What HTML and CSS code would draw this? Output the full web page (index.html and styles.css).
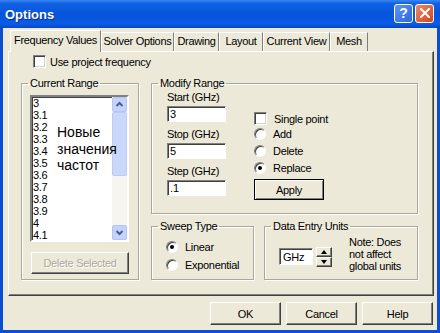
FILE: index.html
```html
<!DOCTYPE html>
<html lang="en">
<head>
    <meta charset="UTF-8">
    <meta name="viewport" content="width=device-width, initial-scale=1.0">
    <title>Options</title>
    <link rel="stylesheet" href="styles.css">
</head>
<body>
    <div class="window">
        <div class="titlebar">
            <span class="title">Options</span>
            <div class="title-btns">
                <span class="tbtn tbtn-help">?</span>
                <span class="tbtn tbtn-close">
                    <svg width="10" height="10" viewBox="0 0 10 10"><path d="M1 1L9 9M9 1L1 9" stroke="#fff" stroke-width="2" stroke-linecap="square"/></svg>
                </span>
            </div>
        </div>
        <div class="client">
            <div class="tabs">
                <span class="tab active" style="width:91px">Frequency Values</span>
                <span class="tab" style="width:73px">Solver Options</span>
                <span class="tab" style="width:45px">Drawing</span>
                <span class="tab" style="width:44px">Layout</span>
                <span class="tab" style="width:67px">Current View</span>
                <span class="tab" style="width:38px">Mesh</span>
            </div>
            <div class="panel">
                <label class="check top-check"><span class="box"></span>Use project frequency</label>
                <div class="panel-grid">
                    <fieldset class="group current">
                        <legend>Current Range</legend>
                        <div class="listbox">
                            <ul class="items">
                                <li>3</li>
                                <li>3.1</li>
                                <li>3.2</li>
                                <li>3.3</li>
                                <li>3.4</li>
                                <li>3.5</li>
                                <li>3.6</li>
                                <li>3.7</li>
                                <li>3.8</li>
                                <li>3.9</li>
                                <li>4</li>
                                <li>4.1</li>
                            </ul>
                            <div class="scrollbar">
                                <span class="sb-btn">
                                    <svg width="13" height="13" viewBox="0 0 13 13"><path d="M3.5 8L6.5 5L9.5 8" fill="none" stroke="#4d6185" stroke-width="2"/></svg>
                                </span>
                                <span class="sb-thumb"></span>
                                <span class="sb-track"></span>
                                <span class="sb-btn">
                                    <svg width="13" height="13" viewBox="0 0 13 13"><path d="M3.5 5L6.5 8L9.5 5" fill="none" stroke="#4d6185" stroke-width="2"/></svg>
                                </span>
                            </div>
                            <div class="note">Новые<br>значения<br>частот</div>
                        </div>
                        <button class="btn btn-delete" disabled>Delete Selected</button>
                    </fieldset>

                    <div class="right-col">
                        <fieldset class="group modify">
                            <legend>Modify Range</legend>
                            <div class="modify-body">
                                <div class="fields">
                                    <label class="field-label" for="start">Start (GHz)</label>
                                    <input class="text-box" id="start" type="text" value="3">
                                    <label class="field-label" for="stop">Stop (GHz)</label>
                                    <input class="text-box" id="stop" type="text" value="5">
                                    <label class="field-label" for="step">Step (GHz)</label>
                                    <input class="text-box" id="step" type="text" value=".1">
                                </div>
                                <div class="options">
                                    <label class="check"><span class="box"></span>Single point</label>
                                    <label class="radio-row"><span class="radio"></span>Add</label>
                                    <label class="radio-row"><span class="radio"></span>Delete</label>
                                    <label class="radio-row"><span class="radio checked"></span>Replace</label>
                                    <button class="btn btn-default">Apply</button>
                                </div>
                            </div>
                        </fieldset>

                        <div class="lower">
                            <fieldset class="group sweep">
                                <legend>Sweep Type</legend>
                                <label class="radio-row tall"><span class="radio checked"></span>Linear</label>
                                <label class="radio-row tall"><span class="radio"></span>Exponential</label>
                            </fieldset>
                            <fieldset class="group units">
                                <legend>Data Entry Units</legend>
                                <div class="units-body">
                                    <span class="unit-box">GHz</span>
                                    <span class="spinner">
                                        <span class="spin-btn"><span class="tri-up"></span></span>
                                        <span class="spin-btn"><span class="tri-down"></span></span>
                                    </span>
                                    <p class="units-note">Note: Does<br>not affect<br>global units</p>
                                </div>
                            </fieldset>
                        </div>
                    </div>
                </div>
            </div>
            <div class="actions">
                <button class="btn btn-action">OK</button>
                <button class="btn btn-action">Cancel</button>
                <button class="btn btn-action">Help</button>
            </div>
        </div>
    </div>
</body>
</html>
```

FILE: styles.css
```css
body {
    margin: 0;
    font-family: "Liberation Sans", Arial, sans-serif;
    font-size: 11px;
    letter-spacing: -0.3px;
    color: #000;
}
.window {
    width: 440px;
    height: 333px;
    display: flex;
    flex-direction: column;
    background: #0a4ed6;
}
.titlebar {
    height: 28px;
    flex: none;
    display: flex;
    align-items: center;
    justify-content: space-between;
    padding: 0 6px 0 5px;
    background: linear-gradient(#3a86f4 0%, #1262e6 12%, #0554d9 50%, #0a5ce6 85%, #0846c6 100%);
}
.title {
    color: #fff;
    font-weight: bold;
    font-size: 13px;
    letter-spacing: 0;
    text-shadow: 1px 1px 0 #0a2a8c;
}
.title-btns {
    display: flex;
    gap: 2px;
    margin-top: -2px;
}
.tbtn {
    width: 17px;
    height: 17px;
    border: 1px solid #fff;
    border-radius: 3px;
    display: flex;
    align-items: center;
    justify-content: center;
    color: #fff;
    font-weight: bold;
    font-size: 14px;
    letter-spacing: 0;
}
.tbtn-help {
    background: linear-gradient(135deg, #5d95f6, #2a67e3);
}
.tbtn-close {
    background: linear-gradient(135deg, #ee8a66, #d4421f);
}
.client {
    flex: 1;
    margin: 0 3px 3px;
    background: #ece9d8;
    display: flex;
    flex-direction: column;
}
.tabs {
    display: flex;
    align-items: flex-end;
    height: 21px;
    margin: 2px 0 0 7px;
    position: relative;
    z-index: 1;
}
.tab {
    box-sizing: border-box;
    height: 19px;
    line-height: 17px;
    text-align: center;
    white-space: nowrap;
    border: 1px solid #fff;
    border-right-color: #808080;
    border-bottom: none;
}
.tab.active {
    height: 22px;
    margin-bottom: -1px;
    line-height: 18px;
    background: #ece9d8;
}
.panel {
    box-sizing: border-box;
    height: 245px;
    margin: 0 3px 0 5px;
    padding: 3px 0 0 12px;
    border: 1px solid;
    border-color: #fff #404040 #404040 #fff;
    box-shadow: inset -1px -1px 0 #808080;
}
.check {
    display: flex;
    align-items: center;
    height: 13px;
    white-space: nowrap;
}
.box {
    box-sizing: border-box;
    width: 13px;
    height: 13px;
    margin-right: 5px;
    background: #fff;
    border: 1px solid;
    border-color: #808080 #fff #fff #808080;
    box-shadow: inset 1px 1px 0 #404040, inset -1px -1px 0 #d4d0c8;
}
.top-check {
    margin-left: 12px;
    margin-left: 12px;
}
.top-check .box {
    margin-right: 4px;
}
.panel-grid {
    display: grid;
    grid-template-columns: 118px 267px;
    column-gap: 12px;
    height: 203px;
    margin-top: 9px;
}
.group {
    margin: 0;
    padding: 0;
    min-width: 0;
    border: 1px solid #aca899;
    box-shadow: inset 1px 1px 0 #fff, 1px 1px 0 #fff;
}
.group legend {
    margin-left: 6px;
    padding: 0 2px;
    line-height: 13px;
}
.listbox {
    position: relative;
    box-sizing: border-box;
    display: flex;
    width: 99px;
    height: 147px;
    margin: 5px 0 0 8px;
    background: #fff;
    border: 2px solid;
    border-color: #808080 #fff #fff #808080;
    box-shadow: inset 1px 1px 0 #404040;
}
.items {
    flex: 1;
    list-style: none;
    margin: 0;
    padding: 0 0 0 1px;
    line-height: 12px;
    overflow: hidden;
}
.scrollbar {
    width: 15px;
    flex: none;
    display: flex;
    flex-direction: column;
    background: #f6f5f0;
}
.sb-btn {
    box-sizing: border-box;
    height: 15px;
    flex: none;
    display: flex;
    align-items: center;
    justify-content: center;
    background: #c3d3fb;
    border: 1px solid #b2c5f3;
    border-radius: 2px;
}
.sb-thumb {
    box-sizing: border-box;
    height: 64px;
    flex: none;
    background: #cad8fb;
    border: 1px solid #bccdf5;
    border-radius: 2px;
}
.sb-track {
    flex: 1;
}
.note {
    position: absolute;
    left: 25px;
    top: 27px;
    font-size: 14px;
    line-height: 16.5px;
    letter-spacing: 0;
}
.btn {
    box-sizing: border-box;
    font-family: inherit;
    font-size: 11px;
    letter-spacing: -0.3px;
    color: #000;
    background: #ece9d8;
    padding: 0;
    border: 1px solid;
    border-color: #fff #404040 #404040 #fff;
    box-shadow: inset -1px -1px 0 #808080;
}
.btn-delete {
    display: block;
    width: 98px;
    height: 22px;
    margin: 10px 0 0 9px;
    color: #aca899;
    text-shadow: 1px 1px 0 #fff;
}
.right-col {
    display: flex;
    flex-direction: column;
    gap: 6px;
}
.modify {
    height: 137px;
    box-sizing: border-box;
}
.modify-body {
    display: flex;
    padding: 1px 0 0 15px;
}
.fields {
    display: flex;
    flex-direction: column;
    width: 59px;
}
.field-label {
    line-height: 13px;
    white-space: nowrap;
}
.text-box {
    box-sizing: border-box;
    width: 59px;
    height: 16px;
    margin: 2px 0 6px;
    padding: 0 0 0 2px;
    font-family: inherit;
    font-size: 11px;
    background: #fff;
    border: 1px solid;
    border-color: #808080 #fff #fff #808080;
    box-shadow: inset 1px 1px 0 #404040;
    outline: none;
}
.options {
    display: flex;
    flex-direction: column;
    margin: 21px 0 0 28px;
}
.options .box {
    margin-right: 7px;
}
.radio-row {
    display: flex;
    align-items: center;
    height: 17px;
    white-space: nowrap;
}
.radio-row.tall {
    height: 18px;
    margin-left: 14px;
}
.radio {
    position: relative;
    box-sizing: border-box;
    width: 12px;
    height: 12px;
    margin-right: 7px;
    border-radius: 50%;
    background: #fff;
    border: 1px solid;
    border-color: #808080 #fff #fff #808080;
    box-shadow: inset 1px 1px 0 #404040;
}
.radio.checked::after {
    content: "";
    position: absolute;
    left: 3px;
    top: 3px;
    width: 4px;
    height: 4px;
    border-radius: 50%;
    background: #000;
}
.btn-default {
    width: 70px;
    height: 21px;
    margin-top: 3px;
    border: 1px solid #000;
    box-shadow: inset 1px 1px 0 #fff, inset -1px -1px 0 #808080;
}
.lower {
    display: flex;
    gap: 10px;
    flex: 1;
}
.sweep {
    width: 103px;
    box-sizing: border-box;
    padding-top: 5px;
}
.units {
    flex: 1;
}
.units-body {
    display: flex;
    align-items: flex-start;
    padding-left: 14px;
}
.unit-box {
    box-sizing: border-box;
    width: 34px;
    height: 17px;
    margin-top: 15px;
    padding: 2px 0 0 3px;
    background: #fff;
    border: 1px solid;
    border-color: #808080 #fff #fff #808080;
    box-shadow: inset 1px 1px 0 #404040;
}
.spinner {
    display: flex;
    flex-direction: column;
    width: 16px;
    margin: 14px 0 0 3px;
}
.spin-btn {
    box-sizing: border-box;
    height: 10px;
    display: flex;
    align-items: center;
    justify-content: center;
    background: #ece9d8;
    border: 1px solid;
    border-color: #fff #404040 #404040 #fff;
    box-shadow: inset -1px -1px 0 #808080;
}
.tri-up {
    border: 3px solid transparent;
    border-top: none;
    border-bottom: 4px solid #000;
}
.tri-down {
    border: 3px solid transparent;
    border-bottom: none;
    border-top: 4px solid #000;
}
.units-note {
    margin: 3px 0 0 17px;
    line-height: 12px;
    white-space: nowrap;
}
.actions {
    display: flex;
    justify-content: flex-end;
    gap: 5px;
    margin-top: 6px;
    padding-right: 4px;
}
.btn-action {
    width: 71px;
    height: 23px;
}
```
